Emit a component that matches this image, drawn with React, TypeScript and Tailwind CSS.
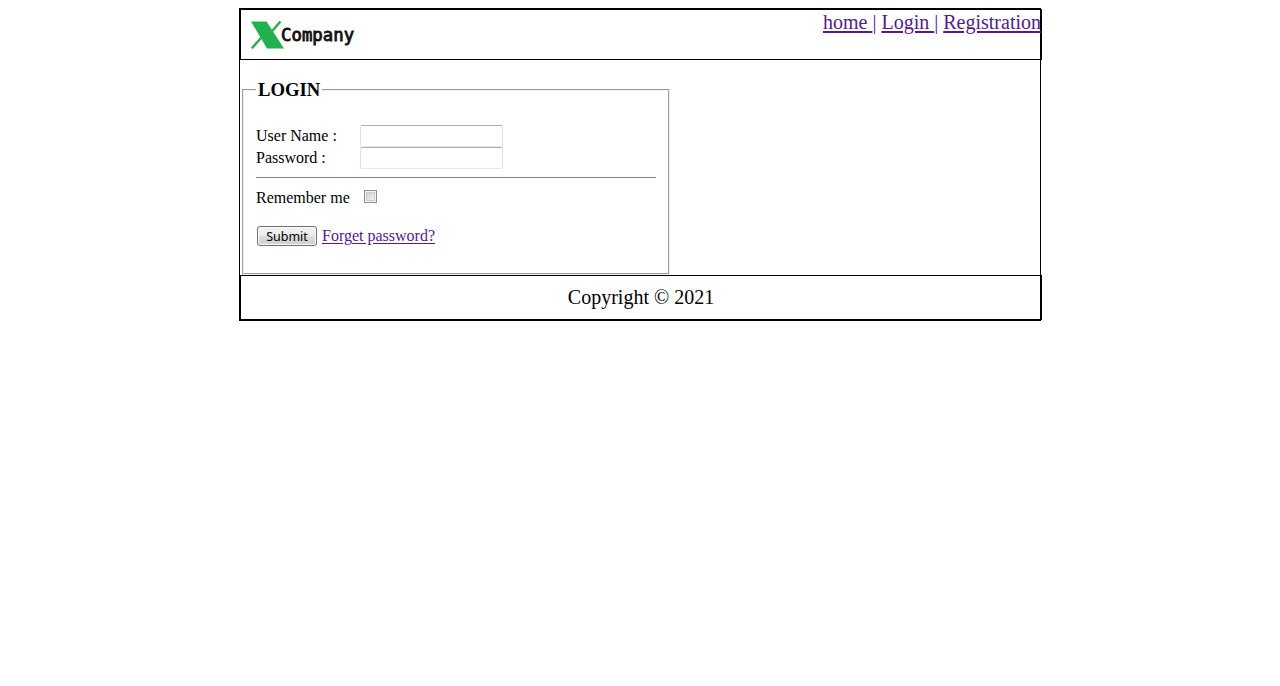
function Logo() {
  return (
    <div className="flex h-[28px] items-start">
      <svg width="33" height="28" viewBox="0 0 33 28" className="shrink-0">
        <path d="M0 0.5H15.5L33 27.5H16Z" fill="#22b14c" />
        <path d="M29.5 0.5L19 12.5M12.5 14L0.8 27.3" stroke="#2fae55" strokeWidth="2.5" fill="none" />
      </svg>
      <span className="-ml-[3px] mt-[4px] font-['DejaVu_Sans_Mono',monospace] text-[17px] leading-[20px] [-webkit-text-stroke:0.85px_#111] text-[#111]">
        <span className="block w-[74px] origin-left scale-x-[1.02]">Company</span>
      </span>
    </div>
  );
}

const inputClass =
  "block w-[143px] rounded-[2px] border border-[#e3e9ef] border-t-[#abadb3] border-x-[#dbdfe6] bg-white outline-none";

export default function App() {
  return (
    <div className="flow-root font-['Liberation_Serif',serif] text-[16px] text-black">
      <div className="mt-[8px] ml-[239px] h-[313px] w-[802px] border border-black">
        <header className="flex h-[51px] w-[802px] justify-between border border-black">
          <div className="pt-[11px] pl-[10px]">
            <Logo />
          </div>
          <nav className="pt-[1px] text-[20px] leading-[23px] whitespace-pre text-[#551a8b]">
            <a href="#" className="underline underline-offset-2">home </a>| <a href="#" className="underline underline-offset-2">Login </a>| <a href="#" className="underline underline-offset-2">Registration</a>
          </nav>
        </header>

        <main className="h-[215px] pt-[19px] pl-[2px]">
          <fieldset className="h-[196px] w-[428px] border-2 border-[#f0f0f0] px-[12px] [border-style:groove]">
            <legend className="px-[2px] text-[18.7px] leading-[21px] font-bold">LOGIN</legend>
            <div className="pt-[25px]">
              <div className="flex h-[22px]">
                <label htmlFor="user" className="w-[104px] pt-[2px] leading-[18px]">User Name :</label>
                <input id="user" type="text" className={inputClass} />
              </div>
              <div className="flex h-[22px]">
                <label htmlFor="pass" className="w-[104px] pt-[2px] leading-[18px]">Password :</label>
                <input id="pass" type="password" className={inputClass} />
              </div>
            </div>
            <div className="mt-[8px] h-px w-[400px] bg-[#808080]" />
            <div className="mt-[11px] flex h-[18px]">
              <label htmlFor="remember" className="w-[108px] leading-[18px]">Remember me</label>
              <input
                id="remember"
                type="checkbox"
                className="mt-[1px] size-[13px] appearance-none border border-[#8e8f8f] bg-linear-to-br from-[#c5cace] to-[#fbfbfb] shadow-[inset_0_0_0_1px_#f4f4f4,inset_0_0_0_2px_#c9cccf]"
              />
            </div>
            <div className="mt-[19px] flex pl-px">
              <button className="h-[20px] w-[60px] rounded-[3px] border border-[#707070] bg-[linear-gradient(#f2f2f2_0%,#ebebeb_50%,#dddddd_50%,#cfcfcf_100%)] font-['Noto_Sans',sans-serif] text-[12.5px] leading-[19px] shadow-[inset_0_0_0_1px_#fafafa]">
                Submit
              </button>
              <a href="#" className="ml-[5px] mt-[1px] leading-[18px] text-[#551a8b] underline underline-offset-2">Forget password?</a>
            </div>
          </fieldset>
        </main>

        <footer className="h-[45px] w-[802px] border border-black pt-[10px] text-center text-[20px] leading-[23px]">
          Copyright © 2021
        </footer>
      </div>
    </div>
  );
}
